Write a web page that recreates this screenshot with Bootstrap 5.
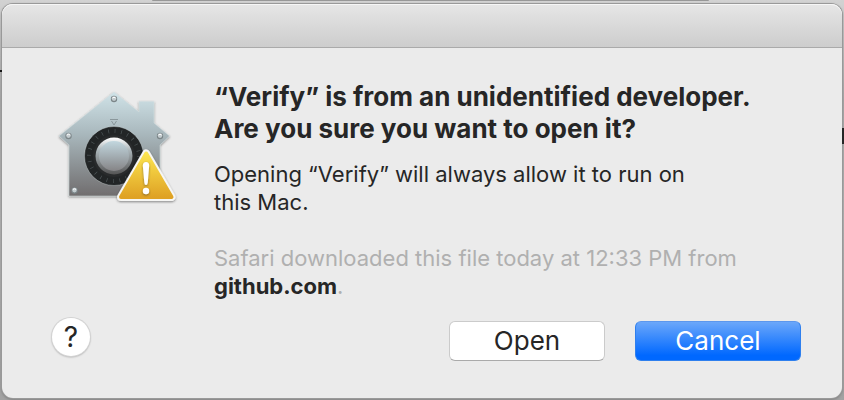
<!DOCTYPE html>
<html lang="en">
<head>
<meta charset="utf-8">
<meta name="viewport" content="width=device-width, initial-scale=1">
<title>Verify</title>
<link href="https://cdn.jsdelivr.net/npm/bootstrap@5.3.0/dist/css/bootstrap.min.css" rel="stylesheet">
<style>
body { font-family: Inter, "Liberation Sans", sans-serif; color: #262626; background: linear-gradient(#d2d2d2, #ababab 25%, #b4b4b4 55%, #a2a2a2); }
.desktop { padding: 4px 2px 2px; overflow: hidden; }
.behind-edge { top: 0; left: 18%; right: 16%; height: 1px; background: #979797; border-radius: 0 0 3px 3px; }
.behind-line { height: 2px; width: 2px; left: 0; background: #161616; top: 70px; }
.behind-mark { height: 16px; width: 2px; right: 0; background: #262626; top: 128px; }
.alert-window { background: #ebebeb; border-radius: 11px; box-shadow: 0 0 0 1px #999, 0 1px 3px #666; }
.titlebar { height: 44px; border-radius: 11px 11px 0 0; background: linear-gradient(#e6e6e6, #cdcdcd); border-bottom: 1px solid #aaa; box-shadow: inset 0 1px #f6f6f6; }
.message-area { padding: 33px 40px 0 52px; }
.icon-column { width: 160px; padding-top: 7px; }
.headline { font-size: 26px; line-height: 32px; font-weight: 700; margin-bottom: 15px; max-width: 560px; }
.detail { font-size: 22px; line-height: 28px; margin-bottom: 28px; max-width: 500px; }
.origin { font-size: 22px; line-height: 28px; color: #b0b0b0; }
.origin strong { color: #262626; font-weight: 700; }
.action-row { padding: 18px 41px 37px 50px; }
.action-buttons { gap: 30px; padding-top: 3px; }
.btn-help { width: 38px; height: 38px; font-size: 28px; line-height: 38px; background: #fff; color: #262626; box-shadow: 0 0 0 1px #d3d3d3, 0 1px 2px #888; }
.btn-dialog { height: 40px; font-size: 26px; line-height: 38px; border-radius: 6px; }
.btn-open { width: 156px; background: #fff; color: #262626; border: 1px solid #cbcbcb; border-bottom-color: #aaa; }
.btn-cancel { width: 166px; color: #fff; background: linear-gradient(#6ba7fa, #0068ff 88%); border: 1px solid #2e7fee; border-top-color: #5c97ed; }
.btn-open:hover { background: #f8f8f8; }
.btn-cancel:hover { color: #fff; }
</style>
<script defer src="https://cdn.jsdelivr.net/npm/bootstrap@5.3.0/dist/js/bootstrap.bundle.min.js"></script>
</head>
<body>
<div class="desktop min-vh-100 position-relative d-flex flex-column">
  <div class="behind-edge position-absolute"></div>
  <div class="behind-line position-absolute"></div>
  <div class="behind-mark position-absolute"></div>
  <main class="alert-window flex-grow-1 d-flex flex-column" role="alertdialog" aria-labelledby="headline" aria-describedby="detail">
    <div class="titlebar"></div>
    <div class="message-area d-flex">
      <div class="icon-column flex-shrink-0">
        <svg width="126" height="120" viewBox="54 88 126 120" role="img" aria-label="Security warning">
          <defs>
            <linearGradient id="steel" x1="0" y1="0" x2="0" y2="1"><stop offset="0" stop-color="#d0e3e8"/><stop offset=".4" stop-color="#a9b8bd"/><stop offset="1" stop-color="#706d6e"/></linearGradient>
            <linearGradient id="knob" x1="0" y1="0" x2="0" y2="1"><stop offset="0" stop-color="#c2d7df"/><stop offset="1" stop-color="#858486"/></linearGradient>
            <linearGradient id="rim" x1="0" y1="0" x2="0" y2="1"><stop offset="0" stop-color="#fff"/><stop offset=".35" stop-color="#aab4b8"/><stop offset="1" stop-color="#555"/></linearGradient>
            <linearGradient id="gold" x1="0" y1="0" x2="0" y2="1"><stop offset="0" stop-color="#fce450"/><stop offset="1" stop-color="#dfa224"/></linearGradient>
            <filter id="soft" x="-20%" y="-20%" width="140%" height="140%"><feDropShadow dx="0" dy="1" stdDeviation="1" flood-color="#333" flood-opacity=".55"/></filter>
            <g id="bolt"><circle r="3.2" fill="#7b8588"/><circle r="2.3" cy="-.4" fill="#c3cccf"/><path d="M-1.6-1Q0-2.4 1.6-1" stroke="#fff" fill="none"/></g>
          </defs>
          <path d="M114 92L139 112V101.500H154V123L169.500 136L160 145V196H69V145L59 136Z" fill="url(#steel)" stroke="#d5e0e3" stroke-width=".5" filter="url(#soft)"/>
          <use href="#bolt" x="114" y="99"/><use href="#bolt" x="68.500" y="136"/><use href="#bolt" x="160" y="136"/><use href="#bolt" x="74.500" y="190.500"/>
          <path d="M110 119.500H118M111.500 121L114 125L116.500 121" fill="none" stroke="#8a979b" stroke-width="1"/>
          <circle cx="114" cy="156" r="29.500" fill="#222526" stroke="#dae1e3" stroke-opacity=".5" stroke-width=".7"/>
          <circle cx="114" cy="156" r="25" fill="none" stroke="#50585a" stroke-width="4" stroke-dasharray=".65 5.895"/>
          <circle cx="114" cy="156" r="21" fill="#292b2c"/>
          <circle cx="114" cy="156" r="18.500" fill="url(#rim)"/>
          <circle cx="114" cy="156" r="15" fill="url(#knob)"/>
          <path d="M146.200 153.500L171.500 197H121Z" fill="#f6f6f4" stroke="#f6f6f4" stroke-width="8" stroke-linejoin="round" filter="url(#soft)"/>
          <path d="M146.200 153.500L171.500 197H121Z" fill="url(#gold)" stroke="url(#gold)" stroke-width="4" stroke-linejoin="round"/>
          <g fill="#fff" filter="url(#soft)"><path d="M142.800 165.500Q143 162 146 162Q149.200 162 149.200 165.500L147.800 182.500Q147.500 185 146 185Q144.500 185 144.300 182.500Z"/><circle cx="146" cy="191" r="3.200"/></g>
        </svg>
      </div>
      <div>
        <h1 class="headline" id="headline">“Verify” is from an unidentified developer. Are you sure you want to open it?</h1>
        <p class="detail" id="detail">Opening “Verify” will always allow it to run on this Mac.</p>
        <p class="origin mb-0">Safari downloaded this file today at 12:33 PM from <strong>github.com</strong>.</p>
      </div>
    </div>
    <div class="action-row d-flex align-items-start mt-auto">
      <button type="button" class="btn btn-help rounded-circle border-0 p-0 me-auto" aria-label="Help">?</button>
      <div class="action-buttons d-flex">
        <button type="button" class="btn btn-dialog btn-open p-0">Open</button>
        <button type="button" class="btn btn-dialog btn-cancel p-0">Cancel</button>
      </div>
    </div>
  </main>
</div>
</body>
</html>
